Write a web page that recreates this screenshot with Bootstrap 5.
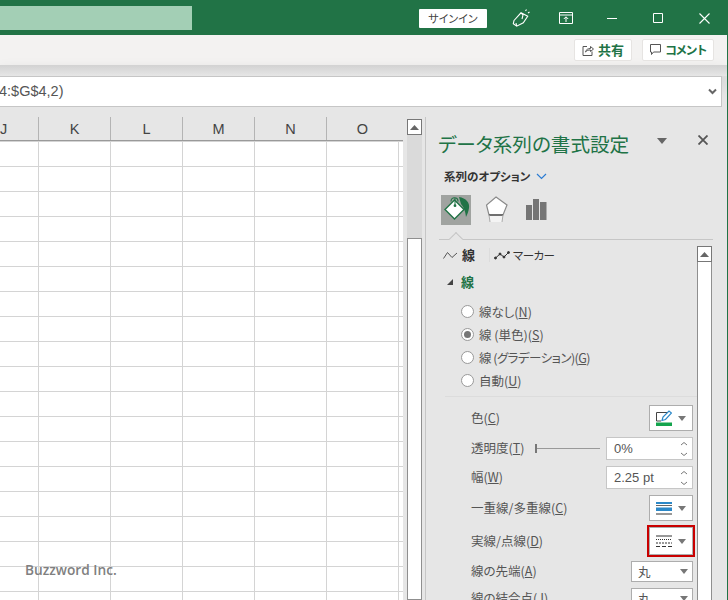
<!DOCTYPE html>
<html lang="ja">
<head>
<meta charset="utf-8">
<title>Excel</title>
<link href="https://cdn.jsdelivr.net/npm/bootstrap@5.3.0/dist/css/bootstrap.min.css" rel="stylesheet">
<style>
html,body{margin:0;height:600px;overflow:hidden;background:#e6e6e6}
body{font-family:"Noto Sans CJK JP","Noto Sans",sans-serif;font-feature-settings:"palt";color:#444}
.win{width:728px;height:600px;overflow:hidden;border-right:1px solid #217346;position:relative}
.tbar{height:35px;background:#217346;padding:6px 0 5px 0}
.srch{width:192px;height:24px;background:#a3cfb5}
.signin{width:68px;height:19px;background:#fff;margin-left:227px;font-size:11px;color:#444;line-height:19px;text-align:center;border-radius:1px}
.tbtn{display:block;flex:none}
.rbn{height:30px;background:#f3f2f1;padding:4px 13px 0 0;gap:10px}
.rbtn{height:22px;background:#fff;border:1px solid #e6e4e2;border-radius:2px;color:#217346;font-weight:700;font-size:13px;line-height:20px;padding:0}
.cmt{font-size:12px;letter-spacing:-1.7px}
.shadow{height:11px;background:linear-gradient(#d2d2d2,#e6e6e6)}
.fbar{height:31px;width:722px;background:#fff;border:1px solid #c6c6c6;border-left:0;font-family:"Liberation Sans",sans-serif;font-size:14.5px;color:#555;line-height:28px;padding:0 4px 1px 0;overflow:hidden}
.fbar span.ftxt{margin-left:-1px}
.wk{height:493px;padding-top:10px;overflow:hidden}
.sheet{width:403px;flex:none;overflow:hidden}
.hdr{height:24px;width:398px;overflow:hidden;border-bottom:1px solid #9a9a9a;display:flex}
.hc{flex:none;width:72px;height:100%;border-right:1px solid #b4b4b4;text-align:center;font-family:"Liberation Sans",sans-serif;font-size:14.5px;color:#444;line-height:24px;position:relative}
.hc:first-child{width:39px;text-align:left;padding-left:0}
.cells{height:460px;width:404px;margin-top:-1px;border-right:1px solid #8f8f8f;
background-image:linear-gradient(to right,transparent 71px,#d4d4d4 71px),linear-gradient(to bottom,transparent 24px,#d4d4d4 24px);
background-size:72px 25px;background-position:39px 1px;background-color:#fff;border-top:1px solid #9a9a9a}
.vs{width:22px;flex:none;padding:2px 3px 0 4px}
.vs-in{background:#dadada;width:15px;height:100%}
.sbtn{background:#fff;border:1px solid #777;display:flex;align-items:center;justify-content:center;flex:none}
.sthumb{background:#fff;border:1px solid #8f8f8f}
.pane{flex:1;border-left:1px solid #c6c6c6;position:relative;min-width:0}
.ptitle{height:26px;margin-top:14px;padding-left:12px;font-size:19.6px;line-height:26px;color:#217346;white-space:nowrap}
.popt{margin-top:11px;padding-left:18px;height:16px;font-size:11.5px;font-weight:700;line-height:16px;color:#333;gap:6px}
.ptabs{margin:11px 0 0 15px;height:30px;gap:15px}
.selbox{width:30px;height:30px;background:#a0a3a0}
.pdiv{height:1px;background:#c6c6c6;width:274px;margin:14px 0 0 13px;position:relative}
.pdiv::after{content:"";position:absolute;left:12px;top:-5px;width:10px;height:10px;background:#e6e6e6;border-left:1px solid #c6c6c6;border-top:1px solid #c6c6c6;transform:rotate(45deg)}
.pbody{margin-top:6px}
.pleft{width:271px;flex:none}
.pscroll{width:15px;flex:none;height:360px}
.tabsrow{height:18px;padding-left:17px;font-size:12.5px;line-height:18px;color:#333}
.mkr{font-size:11.5px;letter-spacing:-.6px}
.sect{height:20px;margin-top:8px;padding-left:21px;font-size:13px;line-height:20px;color:#217346;font-weight:700;gap:8px}
.radios{margin:8px 0 0 35px}
.radr{height:23px;font-size:12.5px;line-height:23px;gap:5px;color:#555}
.tight{letter-spacing:-.55px}
.rdot{width:13px;height:13px;border-radius:50%;background:#fff;border:1px solid #999;flex:none;display:flex;align-items:center;justify-content:center}
.rdot i{display:block;width:7px;height:7px;border-radius:50%;background:#777}
.psep{height:1px;background:#dcdcdc;margin:4px 0 8px 19px;width:252px}
.frow{padding:0 4px 0 45px;font-size:12.5px;color:#555;justify-content:space-between;align-items:center}
.frow u{text-underline-offset:1px}
.h26{height:26px}.h23{height:23px}.h28{height:28px}.h21{height:21px}
.m6{margin-top:6px}
.wbtn{width:44px;height:26px;background:#fff;border:1px solid #adadad;gap:6px;display:flex;align-items:center;justify-content:center;padding:0}
.caret{width:0;height:0;border-left:4px solid transparent;border-right:4px solid transparent;border-top:5px solid #777;flex:none}
.spin{width:87px;height:23px;background:#fff;border:1px solid #c6c6c6;font-family:"Liberation Sans",sans-serif;font-size:13px;line-height:21px;padding:0 4px 0 7px;color:#555}
.sl{width:65px;height:1px;background:#999;position:relative}
.sl::before{content:"";position:absolute;left:0;top:-4px;width:2px;height:9px;background:#777}
.rhl{outline:2.5px solid #c90000;outline-offset:0;height:28px}
.wsel{width:62px;height:21px;background:#fff;border:1px solid #adadad;padding:0 4px 0 6px;font-size:12.5px;line-height:19px;color:#555}
.wm{position:absolute;left:25px;top:561px;font:600 13.7px/18px "Open Sans",sans-serif;color:#808080}
</style>
</head>
<body>
<div class="win">
  <div class="tbar d-flex align-items-center">
    <div class="srch"></div>
    <div class="signin">サインイン</div>
    <svg class="tbtn" style="margin-left:24px" width="20" height="20" viewBox="0 0 20 20" fill="none" stroke="#fff" stroke-width="1.1"><path d="M3 12.500L10 4.800L16.700 8.200L12.300 14.800L5.700 18.200L2.300 15.800Z M10 4.800L12 7L11 11 M5.700 18.200L5 15 M14.500 3L15.500 1.500M17 5L18.500 4"/></svg>
    <svg class="tbtn" style="margin-left:28px" width="14" height="12" viewBox="0 0 14 12" fill="none" stroke="#fff"><path d="M.5 .5H13.5V11.5H.5Z M.5 3H13.5 M7 10V5 M4.800 7L7 4.800L9.200 7"/></svg>
    <svg class="tbtn" style="margin-left:34px" width="10" height="10" viewBox="0 0 10 10" stroke="#fff"><path d="M0 5.500H10"/></svg>
    <svg class="tbtn" style="margin-left:36px" width="10" height="10" viewBox="0 0 10 10" fill="none" stroke="#fff"><path d="M.5 .5H9.500V9.500H.5Z"/></svg>
    <svg class="tbtn" style="margin-left:36px" width="11" height="11" viewBox="0 0 11 11" stroke="#fff" stroke-width="1.100"><path d="M.5 .5L10.500 10.500M10.500 .5L.5 10.500"/></svg>
  </div>
  <div class="rbn d-flex justify-content-end">
    <button class="rbtn btn d-flex align-items-center justify-content-center gap-1" style="width:58px">
      <svg width="12" height="12" viewBox="0 0 12 12" fill="none" stroke="#555"><path d="M5 2.500H1V11.500H10V7.500M3.500 8C4 5.500 6 4.500 8.500 4.500V2.500L11.500 5L8.500 7.500V6C6 6 5 6.500 3.500 8Z"/></svg>共有</button>
    <button class="rbtn btn d-flex align-items-center justify-content-center gap-1" style="width:72px">
      <svg width="11" height="12" viewBox="0 0 11 12" fill="none" stroke="#555"><path d="M.5 .5H10.500V8H3.500L1.500 10.500V8H.5Z"/></svg><span class="cmt">コメント</span></button>
  </div>
  <div class="shadow"></div>
  <div class="fbar d-flex justify-content-between align-items-center">
    <span class="ftxt">4:$G$4,2)</span>
    <svg width="9" height="7" viewBox="0 0 9 7" fill="none" stroke="#666" stroke-width="2"><path d="M1 1.500L4.500 5L8 1.500"/></svg>
  </div>
  <div class="wk d-flex">
    <div class="sheet">
      <div class="hdr">
        <div class="hc">J</div><div class="hc">K</div><div class="hc">L</div><div class="hc">M</div><div class="hc">N</div><div class="hc">O</div>
      </div>
      <div class="cells"></div>
    </div>
    <div class="vs">
      <div class="vs-in d-flex flex-column">
        <div class="sbtn" style="height:16px"><svg width="9" height="5" viewBox="0 0 9 5"><path d="M0 5L4.500 0L9 5Z" fill="#666"/></svg></div>
        <div style="height:103px"></div>
        <div class="sthumb flex-grow-1"></div>
      </div>
    </div>
    <div class="pane">
      <div class="ptitle d-flex">データ系列の書式設定
        <svg style="position:absolute;left:231px;top:21px" width="10" height="6" viewBox="0 0 10 6"><path d="M0 0H10L5 6Z" fill="#666"/></svg>
        <svg style="position:absolute;left:272px;top:18px" width="10" height="10" viewBox="0 0 10 10" stroke="#555" stroke-width="1.800"><path d="M.5 .5L9.500 9.500M9.500 .5L.5 9.500"/></svg>
      </div>
      <div class="popt d-flex align-items-center">系列のオプション
        <svg width="11" height="7" viewBox="0 0 11 7" fill="none" stroke="#2b7cd3" stroke-width="1.200"><path d="M1 1L5.500 5.500L10 1"/></svg>
      </div>
      <div class="ptabs d-flex">
        <div class="selbox">
          <svg width="30" height="30" viewBox="0 0 30 30">
            <path d="M18 2C25 3 29 8 28 13C27.500 17 26 20 25 22C24.500 18 24 14 20 9Z" fill="#217346"/>
            <path d="M13.500 5L23 14.500L13.500 24L4 14.500Z" fill="#fff" stroke="#217346" stroke-width="1.400"/>
            <path d="M10 6.500C10 1.500 17 1.500 17 6.500" fill="none" stroke="#217346" stroke-width="1.200"/>
            <path d="M14 3V10" stroke="#217346" stroke-width="1"/>
            <circle cx="14" cy="10.700" r="1.400" fill="#217346"/>
          </svg>
        </div>
        <svg width="24" height="30" viewBox="0 0 24 30" fill="none"><path d="M3 20H17L16 27H4Z" fill="#f4f4f4"/><path d="M10 2L21 10L17 20H3L0.500 10Z" fill="#fff" stroke="#8a8a8a" stroke-width="1.200"/><path d="M3 20H17" stroke="#555" stroke-width="1.500"/><path d="M3 20L4 27M17 20L16 27" stroke="#aaa"/></svg>
        <svg style="margin-left:1px" width="22" height="30" viewBox="0 0 22 30" fill="#757575"><path d="M0 10H6V25H0ZM7 4H13V25H7ZM14 7H20.500V25H14Z"/></svg>
      </div>
      <div class="pdiv"></div>
      <div class="pbody d-flex">
        <div class="pleft">
          <div class="tabsrow d-flex align-items-center">
            <svg width="15" height="9" viewBox="0 0 15 9" fill="none" stroke="#555"><path d="M.5 7.500L4.500 1.500L9 6.500L14 2"/></svg>
            <b class="ms-1" style="font-size:13px">線</b>
            <span style="width:1px;height:14px;background:#dcdcdc;margin:0 4px 0 14px"></span>
            <svg width="16" height="9" viewBox="0 0 16 9" fill="#333" stroke="#333"><path d="M1.500 7L6 3L10 6L14.500 1.500" fill="none"/><circle cx="1.500" cy="7" r="1"/><circle cx="6" cy="3" r="1"/><circle cx="10" cy="6" r="1"/><circle cx="14.500" cy="1.500" r="1"/></svg>
            <span class="mkr" style="margin-left:3px">マーカー</span>
          </div>
          <div class="sect d-flex align-items-center">
            <svg width="6" height="6" viewBox="0 0 6 6"><path d="M6 0V6H0Z" fill="#444"/></svg>
            <span>線</span>
          </div>
          <div class="radios">
            <div class="radr d-flex align-items-center"><span class="rdot"></span><span>線なし(<u>N</u>)</span></div>
            <div class="radr d-flex align-items-center"><span class="rdot"><i></i></span><span>線 (単色)(<u>S</u>)</span></div>
            <div class="radr d-flex align-items-center"><span class="rdot"></span><span class="tight">線 (グラデーション)(<u>G</u>)</span></div>
            <div class="radr d-flex align-items-center"><span class="rdot"></span><span>自動(<u>U</u>)</span></div>
          </div>
          <div class="psep"></div>
          <div class="frow d-flex h26"><span>色(<u>C</u>)</span>
            <button class="wbtn btn rounded-0">
              <svg width="16" height="16" viewBox="0 0 16 16" fill="none"><path d="M11 2.500H.5V11H5" stroke="#444"/><path d="M6 10.500L7 7L13 1L15.500 3L9.500 9.500Z" fill="#fff" stroke="#2b88c8" stroke-width="1.200"/><path d="M0 12.500H16V16H0Z" fill="#14a44d"/></svg>
              <span class="caret"></span></button>
          </div>
          <div class="frow d-flex h23 m6"><span class="d-flex align-items-center">透明度(<u>T</u>)</span>
            <span class="sl" style="position:absolute;left:109px"></span>
            <div class="spin d-flex justify-content-between align-items-center"><span>0%</span>
              <svg width="8" height="16" viewBox="0 0 8 16" fill="none" stroke="#777"><path d="M1 4L4 1.500L7 4M1 12L4 14.500L7 12"/></svg></div>
          </div>
          <div class="frow d-flex h23 m6"><span>幅(<u>W</u>)</span>
            <div class="spin d-flex justify-content-between align-items-center"><span>2.25 pt</span>
              <svg width="8" height="16" viewBox="0 0 8 16" fill="none" stroke="#777"><path d="M1 4L4 1.500L7 4M1 12L4 14.500L7 12"/></svg></div>
          </div>
          <div class="frow d-flex h26 m6"><span>一重線/多重線(<u>C</u>)</span>
            <button class="wbtn btn rounded-0">
              <svg width="16" height="13" viewBox="0 0 16 13"><path d="M0 0H16V2H0ZM0 5.500H16V9H0Z" fill="#2b88c8"/><path d="M0 3H16V3.800H0ZM0 11.500H16V12.500H0Z" fill="#333"/></svg>
              <span class="caret"></span></button>
          </div>
          <div class="frow d-flex h28 m6"><span>実線/点線(<u>D</u>)</span>
            <button class="wbtn btn rounded-0 rhl">
              <svg width="16" height="13" viewBox="0 0 16 13" fill="none" stroke="#333"><path d="M0 1H16"/><path d="M0 4.500H16" stroke-dasharray="1 1"/><path d="M0 8H16" stroke-dasharray="2 1"/><path d="M0 11.500H16" stroke-dasharray="4 2"/></svg>
              <span class="caret"></span></button>
          </div>
          <div class="frow d-flex h21 m6"><span>線の先端(<u>A</u>)</span>
            <div class="wsel d-flex justify-content-between align-items-center"><span>丸</span><span class="caret"></span></div>
          </div>
          <div class="frow d-flex h21 m6"><span>線の結合点(<u>J</u>)</span>
            <div class="wsel d-flex justify-content-between align-items-center"><span>丸</span><span class="caret"></span></div>
          </div>
        </div>
        <div class="pscroll d-flex flex-column">
          <div class="sbtn" style="height:16px"><svg width="9" height="5" viewBox="0 0 9 5"><path d="M0 5L4.500 0L9 5Z" fill="#666"/></svg></div>
          <div class="sthumb flex-grow-1" style="border-top:0"></div>
        </div>
      </div>
    </div>
  </div>
  <div class="wm">Buzzword Inc.</div>
</div>
<script src="https://cdn.jsdelivr.net/npm/bootstrap@5.3.0/dist/js/bootstrap.bundle.min.js"></script>
</body>
</html>
